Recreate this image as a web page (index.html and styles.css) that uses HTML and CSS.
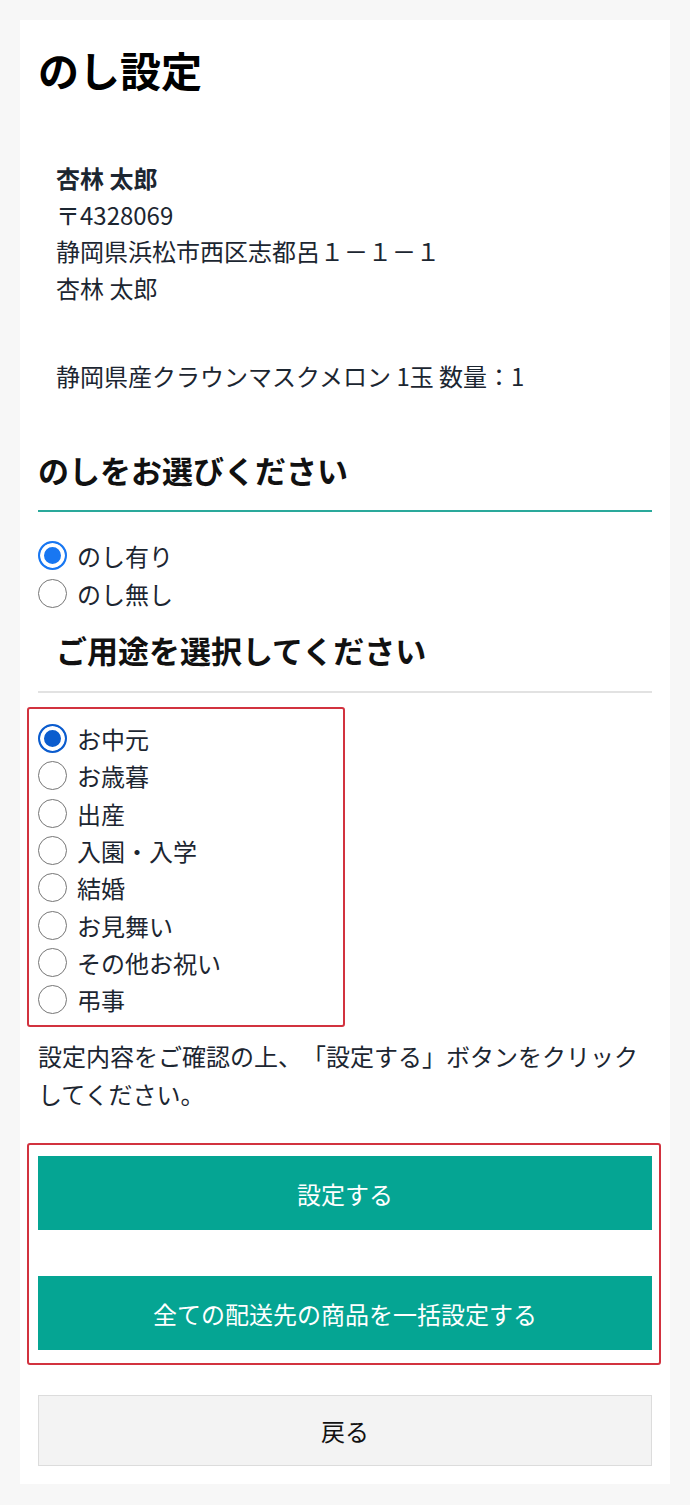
FILE: index.html
```html
<!DOCTYPE html>
<html lang="ja">
<head>
    <meta charset="UTF-8">
    <meta name="viewport" content="width=device-width, initial-scale=1.0">
    <title>のし設定</title>
    <link rel="stylesheet" href="styles.css">
</head>
<body>
    <div class="card">
        <h1>のし設定</h1>

        <!-- お届け先 -->
        <div class="address">
            <div class="name">杏林 太郎</div>
            <div>〒4328069</div>
            <div>静岡県浜松市西区志都呂１－１－１</div>
            <div>杏林 太郎</div>
        </div>
        <div class="product">静岡県産クラウンマスクメロン 1玉 数量：1</div>

        <h2 class="section-title">のしをお選びください</h2>
        <div class="radio-list">
            <label class="radio"><input type="radio" name="noshi" checked><span>のし有り</span></label>
            <label class="radio"><input type="radio" name="noshi"><span>のし無し</span></label>
        </div>

        <h2 class="sub-title">ご用途を選択してください</h2>
        <div class="radio-list highlight purpose">
            <label class="radio"><input type="radio" name="purpose" checked><span>お中元</span></label>
            <label class="radio"><input type="radio" name="purpose"><span>お歳暮</span></label>
            <label class="radio"><input type="radio" name="purpose"><span>出産</span></label>
            <label class="radio"><input type="radio" name="purpose"><span>入園・入学</span></label>
            <label class="radio"><input type="radio" name="purpose"><span>結婚</span></label>
            <label class="radio"><input type="radio" name="purpose"><span>お見舞い</span></label>
            <label class="radio"><input type="radio" name="purpose"><span>その他お祝い</span></label>
            <label class="radio"><input type="radio" name="purpose"><span>弔事</span></label>
        </div>

        <p class="note">設定内容をご確認の上、「設定する」ボタンをクリックしてください。</p>

        <div class="highlight actions">
            <button class="btn primary">設定する</button>
            <button class="btn primary">全ての配送先の商品を一括設定する</button>
        </div>

        <button class="btn back">戻る</button>
    </div>
</body>
</html>
```

FILE: styles.css
```css
body {
    margin: 0;
    padding: 20px;
    background-color: #f7f7f7;
    font-family: "Noto Sans CJK JP", "Noto Sans", sans-serif;
    color: #1c2631;
    text-spacing-trim: space-all;
}
.card {
    background: #fff;
    padding: 21px 18px 18px;
}
h1 {
    margin: 0;
    font-size: 41px;
    line-height: 56px;
    font-weight: 700;
    color: #000;
}
.address {
    margin-top: 63px;
    padding-left: 18px;
    font-size: 24px;
    line-height: 36.5px;
}
.address .name {
    font-weight: 700;
}
.product {
    margin-top: 52px;
    padding-left: 18px;
    font-size: 24px;
    line-height: 36px;
}
.section-title,
.sub-title {
    margin: 0;
    font-size: 31px;
    line-height: 44px;
    font-weight: 700;
    color: #111;
}
.section-title {
    margin-top: 54px;
    padding-bottom: 18px;
    border-bottom: 2px solid #2aa99b;
}
.sub-title {
    margin-top: 16px;
    padding-left: 18px;
    padding-bottom: 19px;
    border-bottom: 2px solid #e2e2e2;
}
.radio-list {
    margin-top: 24px;
}
.radio {
    display: flex;
    align-items: center;
    gap: 10px;
    height: 38px;
    font-size: 24px;
}
.radio input {
    appearance: none;
    -webkit-appearance: none;
    margin: 0;
    width: 29px;
    height: 29px;
    border: 1.5px solid #767676;
    border-radius: 50%;
    background: #fff;
    box-sizing: border-box;
}
.radio input:checked {
    border: 2px solid #1877f2;
    background: #1877f2;
    box-shadow: inset 0 0 0 4px #fff;
}
.highlight {
    box-sizing: border-box;
    border: 2px solid #d2323f;
    border-radius: 3px;
    margin-left: -11px;
}
.purpose {
    width: 318px;
    margin-top: 14px;
    padding: 11px 0 7px 9px;
}
.purpose .radio {
    height: 37.3px;
}
.purpose input:checked {
    border-color: #0b5cce;
    background: #0b5cce;
}
.note {
    margin: 10px 0 0;
    font-size: 24px;
    line-height: 38px;
}
.actions {
    margin-top: 30px;
    width: 634px;
    padding: 11px 0 13px 9px;
    display: flex;
    flex-direction: column;
    gap: 46px;
}
.btn {
    display: block;
    width: 614px;
    font-family: inherit;
    font-size: 24px;
    cursor: pointer;
    margin: 0;
}
.primary {
    height: 74px;
    border: none;
    background-color: #05a593;
    color: #fff;
}
.back {
    margin-top: 30px;
    height: 71px;
    background-color: #f3f3f3;
    border: 1px solid #dcdcdc;
    color: #111;
}
```
